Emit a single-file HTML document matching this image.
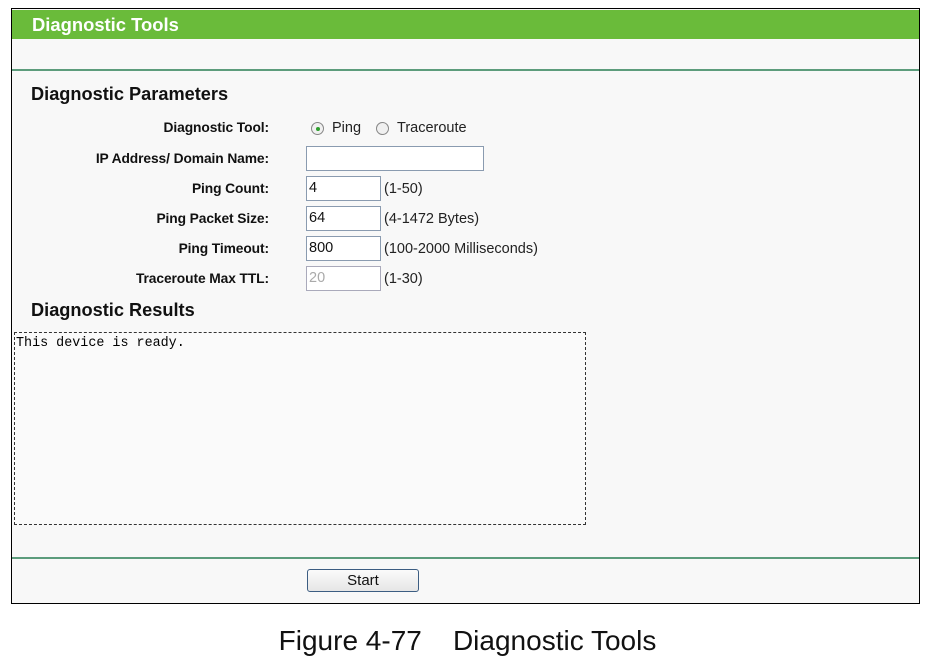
<!DOCTYPE html>
<html><head><meta charset="utf-8"><style>
body{margin:0;width:935px;height:662px;background:#fff;position:relative;font-family:"Liberation Sans",Arial,sans-serif;overflow:hidden}
.a{position:absolute}
.frame{left:11px;top:8px;width:907px;height:594px;border:1px solid #000;background:#f8f8f8}
.hdr{left:12px;top:10px;width:907px;height:29px;background:#6abb3a}
.hdr span{position:absolute;left:20px;top:4px;color:#fff;font-weight:bold;font-size:18.4px}
.line{left:12px;width:907px;height:2px;background:#5c9c7c}
h2{margin:0;font-size:18.2px;font-weight:bold;color:#111}
.lbl{font-size:13.8px;font-weight:bold;color:#111;text-align:right;width:260px;left:9px;letter-spacing:-0.1px}
.in{left:306px;height:23px;border:1px solid #8a9bb0;background:#fff;font-size:14.5px;line-height:23px;padding-left:2px;box-sizing:content-box;color:#111}
.note{left:384px;font-size:14.5px;color:#222}
.rad{width:11px;height:11px;border:1px solid #888;border-radius:50%;background:#f0f0f0}
.dot{left:4px;top:4px;width:4px;height:4px;border-radius:50%;background:#2c9e2c}
.res{left:14px;top:332px;width:572px;height:193px;border:1px dashed #333;background:#fafafa;font-family:"Liberation Mono",monospace;font-size:13.4px;padding:3px 1px;box-sizing:border-box}
.btn{left:307px;top:569px;width:110px;height:21px;border:1px solid #3c5d82;border-radius:3px;background:linear-gradient(#fbfbfb,#e6e6e6);font-size:15px;text-align:center;line-height:21px;color:#111}
.cap{left:0;width:935px;top:625px;text-align:center;font-size:28px;color:#111}
</style></head><body>
<div class="a frame"></div>
<div class="a hdr"><span>Diagnostic Tools</span></div>
<div class="a line" style="top:69px"></div>
<h2 class="a" style="left:31px;top:84px">Diagnostic Parameters</h2>
<div class="a lbl" style="top:120px">Diagnostic Tool:</div>
<div class="a lbl" style="top:151px">IP Address/ Domain Name:</div>
<div class="a lbl" style="top:181px">Ping Count:</div>
<div class="a lbl" style="top:211px">Ping Packet Size:</div>
<div class="a lbl" style="top:241px">Ping Timeout:</div>
<div class="a lbl" style="top:271px">Traceroute Max TTL:</div>
<div class="a rad" style="left:311px;top:122px"><div class="a dot"></div></div>
<div class="a" style="left:332px;top:120px;font-size:14.5px;color:#222">Ping</div>
<div class="a rad" style="left:376px;top:122px"></div>
<div class="a" style="left:397px;top:120px;font-size:14.5px;color:#222">Traceroute</div>
<div class="a in" style="top:146px;width:174px"></div>
<div class="a in" style="top:176px;width:71px">4</div>
<div class="a note" style="top:181px">(1-50)</div>
<div class="a in" style="top:206px;width:71px">64</div>
<div class="a note" style="top:211px">(4-1472 Bytes)</div>
<div class="a in" style="top:236px;width:71px">800</div>
<div class="a note" style="top:241px">(100-2000 Milliseconds)</div>
<div class="a in" style="top:266px;width:71px;color:#aaa;border-color:#aab">20</div>
<div class="a note" style="top:271px">(1-30)</div>
<h2 class="a" style="left:31px;top:300px">Diagnostic Results</h2>
<div class="a res">This device is ready.</div>
<div class="a line" style="top:557px"></div>
<div class="a btn">Start</div>
<div class="a cap">Figure 4-77&nbsp;&nbsp;&nbsp; Diagnostic Tools</div>
</body></html>
